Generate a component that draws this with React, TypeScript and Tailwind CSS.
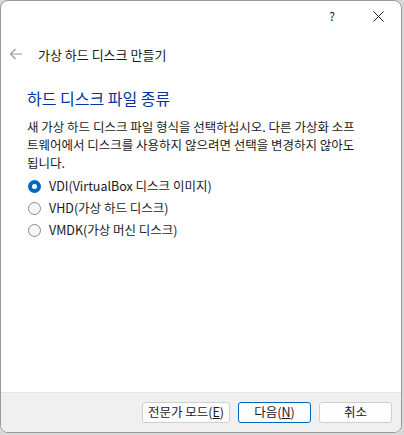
export default function App() {
  const font = { fontFamily: '"Noto Sans CJK KR", "Noto Sans", sans-serif' };
  return (
    <div className="h-[435px] w-[404px] overflow-hidden bg-[#d9d9d9]" style={font}>
      <div className="flex h-[433px] w-[402px] flex-col overflow-hidden rounded-[8px] border border-[#9a9a9a] bg-white text-[#1a1a1a]">
        {/* title bar */}
        <div className="flex h-[30px] shrink-0 items-center justify-end">
          <span className="w-[46px] text-center text-[12px] leading-none">?</span>
          <span className="flex w-[46px] items-center justify-center">
            <svg width="11" height="11" viewBox="0 0 11 11" className="stroke-[#222]">
              <path d="M0.5 0.5 L10.5 10.5 M10.5 0.5 L0.5 10.5" strokeWidth="1" />
            </svg>
          </span>
        </div>

        {/* wizard header */}
        <div className="mt-[11px] flex h-[24px] items-center pl-[8px]">
          <svg width="14" height="12" viewBox="0 0 14 12" className="stroke-[#9a9a9a]" fill="none">
            <path d="M13 6 H1.5 M6.5 1 L1.5 6 L6.5 11" strokeWidth="1.2" />
          </svg>
          <span className="ml-[15px] text-[13px] leading-none">가상 하드 디스크 만들기</span>
        </div>

        {/* page body */}
        <div className="flex flex-1 flex-col pl-[26px]">
          <h1 className="mt-[24px] text-[16px] leading-none text-[#0036a3]">하드 디스크 파일 종류</h1>
          <div className="mt-[12px] text-[12.5px] leading-[18px] whitespace-nowrap">
            <div>새 가상 하드 디스크 파일 형식을 선택하십시오. 다른 가상화 소프</div>
            <div>트웨어에서 디스크를 사용하지 않으려면 선택을 변경하지 않아도</div>
            <div>됩니다.</div>
          </div>
          <div className="mt-[7px] flex flex-col gap-[8px] pl-[1px] text-[12.5px]">
            {[
              { label: 'VDI(VirtualBox 디스크 이미지)', on: true },
              { label: 'VHD(가상 하드 디스크)', on: false },
              { label: 'VMDK(가상 머신 디스크)', on: false },
            ].map((o) => (
              <label key={o.label} className="flex h-[14px] items-center">
                {o.on ? (
                  <span className="flex h-[13px] w-[13px] items-center justify-center rounded-full bg-[#0067c0]">
                    <span className="h-[5px] w-[5px] rounded-full bg-white" />
                  </span>
                ) : (
                  <span className="h-[13px] w-[13px] rounded-full border border-[#8a8a8a] bg-[#f7f7f7]" />
                )}
                <span className="ml-[8px] leading-none">{o.label}</span>
              </label>
            ))}
          </div>
        </div>

        {/* footer */}
        <div className="flex h-[40px] shrink-0 items-center justify-end gap-[8px] border-t border-[#e5e5e5] bg-[#f0f0f0] pr-[9px] text-[12.5px]">
          <button className="h-[21px] w-[88px] rounded-[3px] border border-[#cfcfcf] bg-[#fdfdfd] leading-none">
            전문가 모드(<span className="underline">E</span>)
          </button>
          <button className="h-[21px] w-[73px] rounded-[3px] border border-[#0067c0] bg-[#fdfdfd] leading-none">
            다음(<span className="underline">N</span>)
          </button>
          <button className="h-[21px] w-[73px] rounded-[3px] border border-[#cfcfcf] bg-[#fdfdfd] leading-none">
            취소
          </button>
        </div>
      </div>
    </div>
  );
}
